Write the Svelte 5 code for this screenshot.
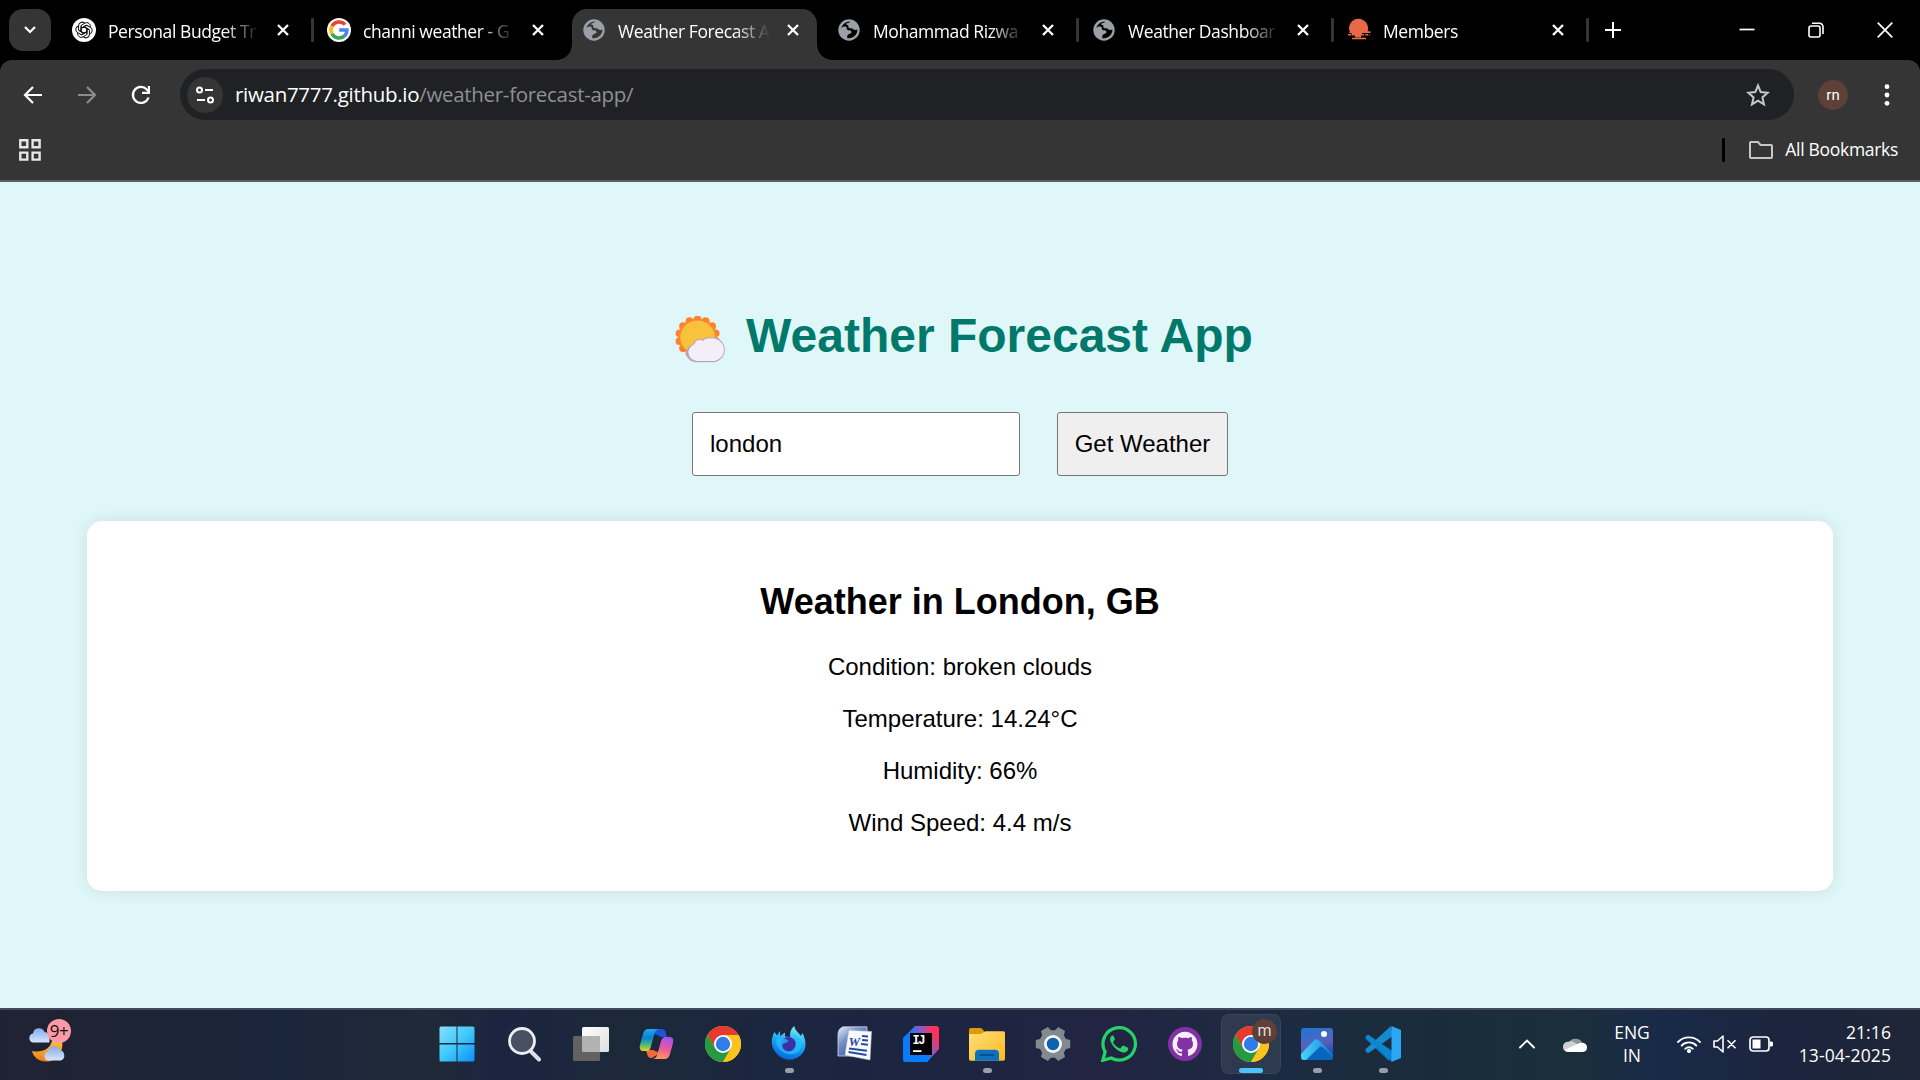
<script>
  const tabs = [
    { title: 'Personal Budget Tr', icon: 'gpt' },
    { title: 'channi weather - G', icon: 'google' },
    { title: 'Weather Forecast A', icon: 'globe', active: true },
    { title: 'Mohammad Rizwa', icon: 'globe' },
    { title: 'Weather Dashboar', icon: 'globe' },
    { title: 'Members', icon: 'sunset' }
  ];
  const apps = [
    { icon: 'start' }, { icon: 'search' }, { icon: 'taskview' }, { icon: 'copilot' }, { icon: 'chrome' },
    { icon: 'firefox', open: true }, { icon: 'word' }, { icon: 'idea' }, { icon: 'files', open: true },
    { icon: 'settings' }, { icon: 'whatsapp' }, { icon: 'github' },
    { icon: 'chrome', active: true, badge: 'm' }, { icon: 'photos', open: true }, { icon: 'code', open: true }
  ];
  const readings = ['Condition: broken clouds', 'Temperature: 14.24°C', 'Humidity: 66%', 'Wind Speed: 4.4 m/s'];
  const petals = [0, 60, 120, 180, 240, 300];
  const rays = Array.from({ length: 14 }, (_, i) => ({
    x: 21.5 + 17.6 * Math.cos((i * Math.PI) / 7 - Math.PI / 2),
    y: 21 + 17.6 * Math.sin((i * Math.PI) / 7 - Math.PI / 2)
  }));
  let city = $state('london');
</script>

{#snippet favicon(name)}
  <svg class="favicon" viewBox="0 0 24 24">
    {#if name === 'gpt'}
      <circle cx="12" cy="12" r="12" fill="#fff" />
      <g fill="none" stroke="#111" stroke-width="1" stroke-linejoin="round">
        {#each petals as a}
          <path transform="rotate({a} 12 12)" d="M9.2 13.600V7.400L13 5.100c2.800-1.500 6 .9 5.200 4.200M9.400 10.200l2.700-1.600 5 2.900" />
        {/each}
      </g>
    {:else if name === 'google'}
      <circle cx="12" cy="12" r="12" fill="#fff" />
      <g fill="none" stroke-width="3.500">
        <path d="M18.100 6.700A8 8 0 0 0 5 8.100" stroke="#ea4335" />
        <path d="M5 8.100a8 8 0 0 0 0 7.800" stroke="#fbbc05" />
        <path d="M5 15.900a8 8 0 0 0 12.400 2" stroke="#34a853" />
        <path d="M12.200 12h7.700a8 8 0 0 1-2.500 5.900" stroke="#4285f4" />
      </g>
    {:else if name === 'globe'}
      <circle cx="12" cy="12" r="10.7" fill="#9aa0a6" />
      <path class="sea" d="M12.800 3.600c-3.600.2-7.200 2.400-8.500 6.400 1.800-1.500 3.700-1.700 5-1 1.200.8-.2 2.100 1.300 3 1.600.8 3.600.2 3.900 1.800.3 1.500-1.600 1.900-2.700 2.400-1.600.6-1.900 2.200-1.400 4 4.700.7 9-2.400 9.900-6.900.1-.6.1-1.200 0-1.700-1.300.7-3.300.4-4.100-.6-1.100-1.300-3.600-.3-4.400-1.300-1-1.200.2-2.600-1.400-2.700-2-.2-1.300-1.700.3-1.900 1.800-.2 2.200-.6 2.100-1.500z" />
    {:else}
      <path d="M2.800 14a9.500 9.500 0 1 1 17.800-.8H23.500V15H15v2h-1v2.500H8V17.500H4.500V15H2z" fill="#e8694a" />
      <path d="M14 16.800h9M1 16.800h4" stroke="#e8694a" stroke-width="1.500" stroke-dasharray="3 1.200" />
      <path d="M5 20.500h14" stroke="#e8694a" stroke-width="1.600" />
    {/if}
  </svg>
{/snippet}

{#snippet cross()}
  <svg class="cross" viewBox="0 0 12 12"><path d="M1 1l10 10M11 1L1 11" stroke="#fff" stroke-width="2.300" /></svg>
{/snippet}

{#snippet appIcon(name)}
  <svg class="app-icon" viewBox="0 0 36 36">
    {#if name === 'start'}
      <linearGradient id="win" x1="0" y1="0" x2="1" y2="1"><stop offset="0" stop-color="#86e0ff" /><stop offset=".5" stop-color="#40c8fb" /><stop offset="1" stop-color="#0a8ff8" /></linearGradient>
      <path d="M2 .5h15.500V17H.5V2A1.500 1.500 0 0 1 2 .5zM18.500.5H34A1.500 1.500 0 0 1 35.500 2v15h-17zM.5 18.500h17v17H2A1.500 1.500 0 0 1 .5 34zM18.500 18.500h17V34a1.500 1.500 0 0 1-1.500 1.500H18.500z" fill="url(#win)" />
    {:else if name === 'search'}
      <path d="M23.500 25l8.500 8.500" stroke="#dcdfe4" stroke-width="4" stroke-linecap="round" />
      <circle cx="15" cy="15" r="12.500" fill="#485061" stroke="#eceef1" stroke-width="2.800" />
    {:else if name === 'taskview'}
      <linearGradient id="tv" x1="0" y1="0" x2="1" y2="1"><stop offset="0" stop-color="#fff" /><stop offset="1" stop-color="#dedede" /></linearGradient>
      <rect x="9" y="1" width="27" height="25" rx="1.500" fill="url(#tv)" />
      <rect x="0" y="10" width="27" height="25" rx="1.500" fill="#626262" />
      <path d="M9 10h18v16H10.500A1.500 1.500 0 0 1 9 24.500z" fill="#b2b2b2" />
    {:else if name === 'copilot'}
      <linearGradient id="cp1" x1="0" y1="0" x2="0" y2="1"><stop offset="0" stop-color="#20a8f0" /><stop offset=".4" stop-color="#0c7fd5" /><stop offset=".7" stop-color="#42b883" /><stop offset="1" stop-color="#f3cf18" /></linearGradient>
      <linearGradient id="cp2" x1=".5" y1="0" x2=".3" y2="1"><stop offset="0" stop-color="#a652ee" /><stop offset=".5" stop-color="#ec5a9a" /><stop offset="1" stop-color="#ff9a50" /></linearGradient>
      <path d="M10 3h13c2 0 3 1 3.500 3l1.500 5h-6L16 8z" fill="#1b55d8" />
      <path d="M13 32h-1c-2 0-3-1-3.600-3L7 24h7l7 3z" fill="#f4663c" />
      <path d="M9 3h10.500c-2.300.5-3.400 2.500-4.200 5.300l-3.400 12.200C11 23.500 10 25 7.500 25H5c-3.600 0-5-2-4-6L4 8c1-3.500 2.500-5 5-5z" fill="url(#cp1)" />
      <path d="M25.500 33H13.800c2.700-.5 3.800-2 4.700-5.300l3.400-12.200c1-3 2-4.500 4.500-4.500H30c3.600 0 5 2 4 6l-3 11c-1 3.500-2.500 5-5.500 5z" fill="url(#cp2)" />
    {:else if name === 'chrome'}
      <circle cx="18" cy="18" r="18" fill="#fbbc05" />
      <path d="M18 9h15.600A18 18 0 0 0 2.400 9l7.800 13.500L18 9z" fill="#e33b2e" />
      <path d="M2.400 9a18 18 0 0 0 15.600 27l7.800-13.500H10.200z" fill="#249a44" />
      <path d="M18 9h15.600a18 18 0 0 1-15.600 27l7.800-13.500z" fill="#fcc31e" />
      <circle cx="18" cy="18" r="9" fill="#fff" /><circle cx="18" cy="18" r="7.200" fill="#2f7de9" />
    {:else if name === 'firefox'}
      <linearGradient id="ff" x1=".7" y1="0" x2=".4" y2="1"><stop offset="0" stop-color="#7beefa" /><stop offset=".5" stop-color="#1ba8f7" /><stop offset="1" stop-color="#0864dc" /></linearGradient>
      <path d="M3.500 6l2.500 3.500L9 5v5l5-3.500v4l5 .5c0-5 1-8.500 4.500-11 0 4 4 6.500 6.500 10l1.500-3c4.500 9 4 17-2 22.500-7 6-17.500 5.500-23.500-1.500C-.5 21.500-.5 13 3.500 6z" fill="url(#ff)" />
      <circle cx="17.500" cy="18.500" r="7.500" fill="#3931a5" />
      <path d="M5 13.500c4-2 9-1.500 12.500 1-1 2.500-4 2.500-5.500 3.500-1.500 3 .5 6 4 7 5 1 8-2 8.500-6.500 1-5-.5-7.500-3-9.500 5 .5 9 4.500 9 10-1 14-25 12-25.500-5.500z" fill="#25bffb" opacity=".75" />
    {:else if name === 'word'}
      <linearGradient id="wd" x1="0" y1="0" x2=".8" y2="1"><stop offset="0" stop-color="#e4ecf8" /><stop offset=".4" stop-color="#7690c5" /><stop offset="1" stop-color="#294f9c" /></linearGradient>
      <path d="M7 .8h23V30H1V8.500C1 4 4 .8 7 .8z" fill="url(#wd)" stroke="#c9d4e8" stroke-width=".8" />
      <path d="M12 4.500l22.500 1L33 34 8 29z" fill="#f7faff" stroke="#c8d2e4" stroke-width=".5" />
      <path d="M25 10l6 .4M25 14l6 .5M24 18l7 .8M12 22.500l18 2.300M11.500 26l18 3" stroke="#2a4b98" stroke-width="2" />
      <text class="word-mark" x="11.500" y="19.500">W</text>
    {:else if name === 'idea'}
      <linearGradient id="ij" x1="0" y1=".6" x2="1" y2=".1"><stop offset=".3" stop-color="#087cfa" /><stop offset=".6" stop-color="#8c58c8" /><stop offset=".85" stop-color="#fe315d" /></linearGradient>
      <path d="M12 0h21q3 0 3 3v20L24 36H3q-3 0-3-3V12z" fill="url(#ij)" />
      <path d="M0 16l8 13 17 0 3 2.500L24 36H3q-3 0-3-3z" fill="#087cfa" />
      <path d="M7 7h22v22H7z" fill="#000" />
      <path d="M10 24.200h8.500v1.800H10z" fill="#fff" />
      <text class="idea-mark" x="9.500" y="18">IJ</text>
    {:else if name === 'files'}
      <linearGradient id="fl" x1="0" y1="0" x2="1" y2="1"><stop offset="0" stop-color="#ffdf7c" /><stop offset="1" stop-color="#fcb91e" /></linearGradient>
      <path d="M0 4q0-2 2-2h9q1.500 0 2.500 1.300L15.500 6v5H0z" fill="#dd9b0a" />
      <path d="M0 8h10.500q2 0 3.300-1.300T17 5.300h17.500q1.500 0 1.500 1.500V33q0 1.800-1.800 1.800H1.800Q0 34.800 0 33z" fill="url(#fl)" />
      <path d="M6 34.800v-7q0-4 4-4h16q4 0 4 4v7z" fill="#0c72bf" />
      <path d="M11.500 29h13" stroke="#07508f" stroke-width="1.800" stroke-linecap="round" />
    {:else if name === 'settings'}
      <g fill="#828990">
        <circle cx="18" cy="18" r="13.800" />
        {#each petals as a}<path transform="rotate({a + 30} 18 18)" d="M12.700 6L14 .8h8L23.300 6v5H12.700z" />{/each}
      </g>
      <circle cx="18" cy="18" r="9" fill="#f4f5f6" /><circle cx="18" cy="18" r="6.200" fill="#0d62ae" />
    {:else if name === 'whatsapp'}
      <path d="M1.800 34.300l2.300-8.400A16.200 16.200 0 1 1 10.200 32z" fill="none" stroke="#25d366" stroke-width="3.200" />
      <path d="M12.300 9.500c-.8-.2-1.500 0-2 .6-1.600 1.700-1.600 4-.3 6.300 2.300 4.500 6 8.200 11 9.900 2.800.8 5.400-.5 6-2.600.3-1.200.2-1.800-.5-2.200l-3.800-1.800c-.6-.3-1-.1-1.500.4l-1.500 1.900c-.4.4-.8.4-1.300.2-2.700-1.100-4.700-2.900-6.200-5.500-.3-.5-.1-.9.3-1.300l1.200-1.600c.2-.4.3-.7.100-1.100z" fill="#25d366" />
    {:else if name === 'github'}
      <circle cx="18" cy="18" r="17" fill="#8130a5" />
      <path transform="translate(5.500 5.800) scale(1.560)" fill="#f4f0f7" d="M8 0C3.580 0 0 3.580 0 8c0 3.540 2.290 6.530 5.470 7.590.4.070.550-.17.550-.38 0-.19-.01-.82-.01-1.490-2.010.37-2.530-.49-2.690-.94-.09-.23-.48-.94-.82-1.130-.28-.15-.68-.52-.01-.53.63-.01 1.080.58 1.230.82.72 1.210 1.870.87 2.330.66.07-.52.28-.87.510-1.070-1.780-.2-3.640-.89-3.640-3.950 0-.87.310-1.590.82-2.150-.08-.2-.36-1.020.08-2.120 0 0 .67-.21 2.200.82.64-.18 1.320-.27 2-.27s1.360.09 2 .27c1.530-1.040 2.200-.82 2.200-.82.440 1.100.16 1.920.08 2.120.510.56.82 1.270.82 2.150 0 3.070-1.870 3.750-3.650 3.950.29.25.54.73.54 1.480 0 1.070-.01 1.930-.01 2.200 0 .21.15.46.55.38A8.010 8.010 0 0 0 16 8c0-4.420-3.580-8-8-8z" />
    {:else if name === 'photos'}
      <linearGradient id="ph" x1="0" y1="0" x2=".3" y2="1"><stop offset="0" stop-color="#1778d2" /><stop offset=".6" stop-color="#5a61bd" /><stop offset="1" stop-color="#1a4fae" /></linearGradient>
      <linearGradient id="mt" x1="0" y1=".5" x2="1" y2=".5"><stop offset="0" stop-color="#46d5f7" /><stop offset=".6" stop-color="#2aa4ea" /><stop offset="1" stop-color="#0a70d0" /></linearGradient>
      <rect x="2" y="2" width="32" height="32" rx="3" fill="url(#ph)" />
      <path d="M2 28l13-13.500q2.500-2.500 5 0L34 28.500V31q0 3-3 3H5q-3 0-3-3z" fill="url(#mt)" />
      <path d="M7 34l13-12.500q2-2 4 0L34 31q-1 3-3 3z" fill="#0866bd" />
      <circle cx="25" cy="8" r="3" fill="#fff" />
    {:else}
      <path d="M3 8.800q-1.700.8-2.500 2.500v1.500L24 35l4.500-9.500z" fill="#0879bd" />
      <path d="M3 27.200q-1.700-.8-2.500-2.500v-1.500L26 0l2 10z" fill="#168bd2" />
      <path d="M.5 11.300q.8-2.300 3-2.500L27 26v9.500z" fill="#0c86d1" />
      <path d="M26.500 0L36 4v28l-9.500 4z" fill="#2aa6f4" />
    {/if}
  </svg>
{/snippet}

<div class="screen">
  <header class="tabstrip">
    <div class="tab-search"><svg width="12" height="8" viewBox="0 0 12 8"><path d="M1 1l5 5 5-5" fill="none" stroke="#fff" stroke-width="2.200" /></svg></div>
    <div class="tabs">
      {#each tabs as tab, i}
        <div class="tab" class:active={tab.active} class:divided={!tab.active && !tabs[i + 1]?.active}>
          {@render favicon(tab.icon)}
          <span class="tab-title">{tab.title}</span>
          {@render cross()}
        </div>
      {/each}
    </div>
    <svg class="plus" viewBox="0 0 16 16"><path d="M8 0v16M0 8h16" stroke="#fff" stroke-width="2" /></svg>
    <div class="window-buttons">
      <svg viewBox="0 0 16 16"><path d="M.5 7.500h15" stroke="#fff" stroke-width="1.700" /></svg>
      <svg viewBox="0 0 16 16"><rect x="1" y="4" width="11" height="11" rx="2" fill="none" stroke="#fff" stroke-width="1.600" /><path d="M4 1.300h7.500a3.500 3.500 0 0 1 3.500 3.500V12" fill="none" stroke="#fff" stroke-width="1.600" /></svg>
      <svg viewBox="0 0 16 16"><path d="M.7.7l14.600 14.600M15.300.7L.7 15.300" stroke="#fff" stroke-width="1.700" /></svg>
    </div>
  </header>

  <section class="chrome">
    <div class="toolbar">
      <svg class="nav" viewBox="0 0 24 24"><path d="M21 12H4M12 4l-8 8 8 8" fill="none" stroke="#fff" stroke-width="2.200" /></svg>
      <svg class="nav" viewBox="0 0 24 24"><path d="M3 12h17M12 4l8 8-8 8" fill="none" stroke="#8b8b8b" stroke-width="2.200" /></svg>
      <svg class="nav" viewBox="0 0 24 24"><path d="M19.500 14.500a8 8 0 1 1-1.700-8l2 2" fill="none" stroke="#fff" stroke-width="2.300" /><path d="M21 3v8h-8V8.800h5.800V3z" fill="#fff" /></svg>
      <div class="omnibox">
        <div class="site-info">
          <svg width="20" height="20" viewBox="0 0 20 20" fill="none" stroke="#fff" stroke-width="2"><circle cx="4.500" cy="5" r="2.500" /><path d="M10 5h8M2 15h8" /><circle cx="15.500" cy="15" r="2.500" /></svg>
        </div>
        <span class="url">riwan7777.github.io<i>/weather-forecast-app/</i></span>
        <svg class="star" viewBox="0 0 24 24"><path d="M12 2.500l2.700 6.600 7.100.6-5.400 4.700 1.600 6.900-6-3.700-6 3.700 1.600-6.900-5.400-4.700 7.100-.6z" fill="none" stroke="#c7c7c7" stroke-width="2" /></svg>
      </div>
      <div class="avatar">rn</div>
      <svg class="dots" viewBox="0 0 6 24" fill="#fff"><circle cx="3" cy="3.700" r="2.400" /><circle cx="3" cy="12" r="2.400" /><circle cx="3" cy="20.300" r="2.400" /></svg>
    </div>
    <div class="bookmarks">
      <svg width="22" height="22" viewBox="0 0 22 22" fill="none" stroke="#e8e8e8" stroke-width="2.400"><path d="M1.300 1.300h7v7h-7zM13.600 1.300h7v7h-7zM1.300 13.600h7v7h-7zM13.600 13.600h7v7h-7z" /></svg>
      <div class="all">
        <span class="rule"></span>
        <svg width="24" height="18" viewBox="0 0 24 18"><path d="M2 1h7l2.500 3H22q1 0 1 1v11q0 1-1 1H2q-1 0-1-1V2q0-1 1-1z" fill="none" stroke="#c7c7c7" stroke-width="2" /></svg>
        <span class="all-label">All Bookmarks</span>
      </div>
    </div>
  </section>

  <main>
    <h1>
      <svg class="weather" viewBox="0 0 49.500 46.500" preserveAspectRatio="none">
        <g fill="#ff822d">{#each rays as r}<circle cx={r.x} cy={r.y} r="3.800" />{/each}<circle cx="21.500" cy="21" r="18" /></g>
        <circle cx="21.500" cy="21" r="16.500" fill="#f9c23c" />
        <path d="M21 45.700a9.200 9.200 0 0 1-3.500-18 5.800 5.800 0 0 1 8.500-4.200 7 7 0 0 1 6.500-2.300 12.200 12.200 0 1 1 5 24.500z" fill="#b4a6bd" />
        <path d="M21 44.500a8.500 8.500 0 0 1-2.500-16.500 5 5 0 0 1 8-3.300 6.500 6.500 0 0 1 6.500-2.500 11 11 0 1 1 4.500 22.300z" fill="#f3eef8" />
      </svg>
      <span>Weather Forecast App</span>
    </h1>
    <div class="form">
      <input type="text" bind:value={city} />
      <button>Get Weather</button>
    </div>
    <article>
      <h2>Weather in London, GB</h2>
      {#each readings as line}<p>{line}</p>{/each}
    </article>
  </main>

  <footer>
    <div class="widgets">
      <svg width="42" height="42" viewBox="0 0 42 42">
        <linearGradient id="cl" x1="0" y1="0" x2="0" y2="1"><stop offset="0" stop-color="#85adee" /><stop offset="1" stop-color="#d6e4fb" /></linearGradient>
        <linearGradient id="mn" x1="0" y1="0" x2="0" y2="1"><stop offset="0" stop-color="#f8c33a" /><stop offset="1" stop-color="#f07b18" /></linearGradient>
        <path d="M34 20c2 11-5 20-14 20.500C11 41 5 36 4 30c10 2 18-2 20-10z" fill="url(#mn)" />
        <path d="M5 21.500a4.600 4.600 0 0 1 0-9 6 6 0 0 1 11.500-1.500q6 .5 5 10.500z" fill="url(#cl)" />
        <path d="M20 39.500a4.600 4.600 0 0 1 0-9 6 6 0 0 1 11.500-1.500 5.500 5.500 0 0 1 1.500 10.500z" fill="url(#cl)" />
      </svg>
      <span class="count">9+</span>
    </div>
    <nav>
      {#each apps as app}
        <div class="app" class:current={app.active} class:open={app.open}>
          {@render appIcon(app.icon)}
          {#if app.badge}<span class="profile">{app.badge}</span>{/if}
        </div>
      {/each}
    </nav>
    <div class="tray">
      <svg class="up" viewBox="0 0 16 10"><path d="M1 8.500l7-7 7 7" fill="none" stroke="#fff" stroke-width="1.900" stroke-linecap="round" /></svg>
      <svg class="cloud" viewBox="0 0 24 16"><path d="M5 8a8 8 0 0 1 14-2l-2 5H4z" fill="#8f989d" /><path d="M5 16A5 5 0 0 1 5 5.800c3-1.300 5-.4 7 1l6 4-6 5.200z" fill="#cdd0d3" /><path d="M1.500 14l14-6.500C20 5.500 24 8 24 11.500S21.500 16 19 16H5q-2 0-3.500-2z" fill="#fff" /></svg>
      <div class="lang">ENG<br />IN</div>
      <svg class="wifi" viewBox="0 0 24 18" fill="none" stroke="#fff" stroke-width="1.800" stroke-linecap="round"><path d="M1 7a15.500 15.500 0 0 1 22 0M4.700 10.500a10.300 10.300 0 0 1 14.600 0M8.200 13.800a5.400 5.400 0 0 1 7.600 0" /><circle cx="12" cy="16" r="1.200" fill="#fff" /></svg>
      <svg class="sound" viewBox="0 0 24 18" fill="none" stroke="#fff" stroke-width="1.600" stroke-linejoin="round"><path d="M1 6h3.500L10 1v16l-5.500-5H1zM14.500 5.200l8 8M22.500 5.200l-8 8" /></svg>
      <svg class="battery" viewBox="0 0 24 16"><rect x="1" y="1" width="19" height="14" rx="3" fill="none" stroke="#fff" stroke-width="1.700" /><path d="M3.500 3.500h8v9h-8zM21 5.500h1.500q1.500 0 1.500 1.500v2q0 1.500-1.500 1.500H21z" fill="#fff" /></svg>
      <div class="clock">21:16<br />13-04-2025</div>
    </div>
  </footer>
</div>

<style>
  :global(body) { margin: 0; overflow: hidden; }
  .screen { width: 1920px; height: 1080px; display: flex; flex-direction: column; background: #000; font-family: 'Open Sans', 'Noto Sans', sans-serif; color: #fff; overflow: hidden; }
  svg { display: block; flex: none; }

  .tabstrip { height: 60px; display: flex; align-items: center; padding-left: 9px; flex: none; }
  .tab-search { width: 42px; height: 42px; border-radius: 14px; background: #353535; display: flex; align-items: center; justify-content: center; }
  .tabs { display: flex; height: 60px; align-items: flex-end; margin-left: 6px; }
  .tab { position: relative; box-sizing: border-box; width: 245px; height: 51px; margin: 0 5px; padding: 0 0 9px 10px; display: flex; align-items: center; border-radius: 15px 15px 0 0; }
  .active { background: #353535; }
  .active::before, .active::after { content: ''; position: absolute; bottom: 0; width: 15px; height: 15px; }
  .active::before { left: -15px; background: radial-gradient(circle at 0 0, transparent 14.500px, #353535 15px); }
  .active::after { right: -15px; background: radial-gradient(circle at 100% 0, transparent 14.500px, #353535 15px); }
  .divided::after { content: ''; position: absolute; right: -7px; top: 9px; width: 3px; height: 24px; border-radius: 1px; background: #353535; }
  .favicon { width: 24px; height: 24px; }
  .sea { fill: #000; }
  .active .sea { fill: #353535; }
  .tab-title { width: 156px; margin: 2px 13px 0 12px; white-space: nowrap; font-size: 17.500px; letter-spacing: -0.420px; line-height: 26px; -webkit-mask-image: linear-gradient(90deg, #000 116px, transparent 152px); mask-image: linear-gradient(90deg, #000 116px, transparent 152px); }
  .cross { width: 12px; height: 12px; }
  .plus { width: 16px; height: 16px; margin-left: 18px; }
  .window-buttons { display: flex; gap: 53px; margin-left: auto; margin-right: 27px; }
  .window-buttons svg { width: 16px; height: 16px; }

  .chrome { height: 122px; box-sizing: border-box; background: #353535; border-radius: 12px 12px 0 0; border-bottom: 2px solid #5d5f60; padding-top: 9px; flex: none; }
  .toolbar { height: 51px; display: flex; align-items: center; padding-left: 21px; }
  .nav { width: 24px; height: 24px; margin-right: 30px; }
  .omnibox { width: 1614px; height: 51px; margin-left: -3px; border-radius: 26px; background: #202124; display: flex; align-items: center; box-sizing: border-box; padding: 0 24px 0 7px; }
  .site-info { width: 36px; height: 36px; border-radius: 50%; background: #353535; display: flex; align-items: center; justify-content: center; }
  .url { margin: -2px 0 0 12px; font-size: 20.500px; letter-spacing: -0.300px; line-height: 30px; }
  .url i { font-style: normal; color: #8f9092; }
  .star { width: 24px; height: 24px; margin-left: auto; }
  .avatar { width: 30px; height: 30px; border-radius: 50%; margin-left: 24px; background: #5d4037; font: 15px/30px Roboto, sans-serif; text-align: center; }
  .dots { width: 6px; height: 24px; margin-left: 36px; }
  .bookmarks { height: 60px; display: flex; align-items: center; justify-content: space-between; padding: 0 22px 0 19px; }
  .all { display: flex; align-items: center; }
  .rule { width: 3px; height: 24px; background: #000; border-radius: 1px; margin-right: 24px; }
  .all-label { font-size: 17.500px; letter-spacing: -0.300px; margin: -2px 0 0 12px; line-height: 24px; }

  main { flex: none; height: 826px; box-sizing: border-box; padding: 126px 87px 0; background: #e0f7fa; font-family: 'Liberation Sans', Arial, sans-serif; color: #000; display: flex; flex-direction: column; align-items: center; }
  h1 { margin: 0 0 0 8px; display: flex; align-items: center; height: 56px; font-size: 48px; line-height: 56px; color: #00796b; }
  .weather { width: 52px; height: 47px; margin: 6px 19px 0 0; }
  .form { display: flex; gap: 37px; margin-top: 48px; }
  input, button { box-sizing: border-box; height: 64px; border: 1px solid #767676; border-radius: 3px; font: 24px 'Liberation Sans', Arial, sans-serif; color: #000; padding: 0 17px; outline: none; }
  input { width: 328px; background: #fff; }
  button { width: 171px; background: #efefef; padding: 0; }
  article { width: 100%; height: 370px; box-sizing: border-box; margin-top: 45px; padding: 60px 0 0; border-radius: 15px; background: #fff; box-shadow: 0 0 15px rgba(0, 0, 0, 0.1); text-align: center; }
  h2 { margin: 0 0 30px; font-size: 36px; line-height: 42px; }
  p { margin: 0 0 24px; font-size: 24px; line-height: 28px; }

  footer { height: 72px; box-sizing: border-box; border-top: 2px solid #41495a; padding-bottom: 2px; display: flex; align-items: center; background: linear-gradient(90deg, #1f2233 0, #1d2434 120px, #1a263c 270px, #1f2937 430px, #1b2540 500px, #1c2939 630px, #1b2640 780px, #1e2540 950px, #212542 1120px, #1c2b41 1280px, #1a2c3b 1440px, #1a2f3a 1560px, #182a48 1660px, #1c253e 1780px, #1f2638 1920px); }
  .widgets { position: relative; width: 396px; height: 42px; padding-left: 28px; margin-top: -4px; }
  .count { position: absolute; left: 47px; top: -2px; width: 24px; height: 24px; border-radius: 50%; background: #ff99a4; color: #111; font-size: 17px; line-height: 23px; text-align: center; letter-spacing: -0.500px; }
  nav { display: flex; }
  .app { position: relative; box-sizing: border-box; width: 60px; height: 60px; margin: 0 3px; border-radius: 8px; display: flex; align-items: center; justify-content: center; }
  .app:first-child { margin-right: 5px; }
  .app-icon { width: 36px; height: 36px; }
  .current { background: rgba(255, 255, 255, 0.080); box-shadow: inset 0 0 0 1px rgba(255, 255, 255, 0.060); }
  .open::after, .current::after { content: ''; position: absolute; bottom: 1px; width: 9px; height: 5px; border-radius: 3px; background: #989da6; }
  .current::after { width: 24px; background: #4cc2ff; }
  .profile { position: absolute; left: 31px; top: 5px; width: 25px; height: 25px; border-radius: 50%; background: #5d4037; color: #e5dcd9; font: 16px/24px Roboto, sans-serif; text-align: center; }
  .word-mark { font: italic bold 13px 'Liberation Serif', serif; fill: #2a4b98; }
  .idea-mark { font: bold 12px 'Liberation Mono', monospace; fill: #fff; letter-spacing: -1.500px; }
  .tray { margin-left: auto; padding-right: 29px; display: flex; align-items: center; font-size: 17.500px; line-height: 23px; }
  .up { width: 16px; height: 10px; margin-right: 28px; }
  .cloud { width: 24px; height: 16px; margin-right: 26px; }
  .lang { width: 38px; text-align: center; margin-right: 26px; }
  .wifi { width: 24px; height: 18px; margin-right: 12px; }
  .sound { width: 24px; height: 18px; margin-right: 12px; }
  .battery { width: 24px; height: 16px; margin-right: 24px; }
  .clock { width: 94px; text-align: right; letter-spacing: 0.100px; white-space: nowrap; }
</style>
